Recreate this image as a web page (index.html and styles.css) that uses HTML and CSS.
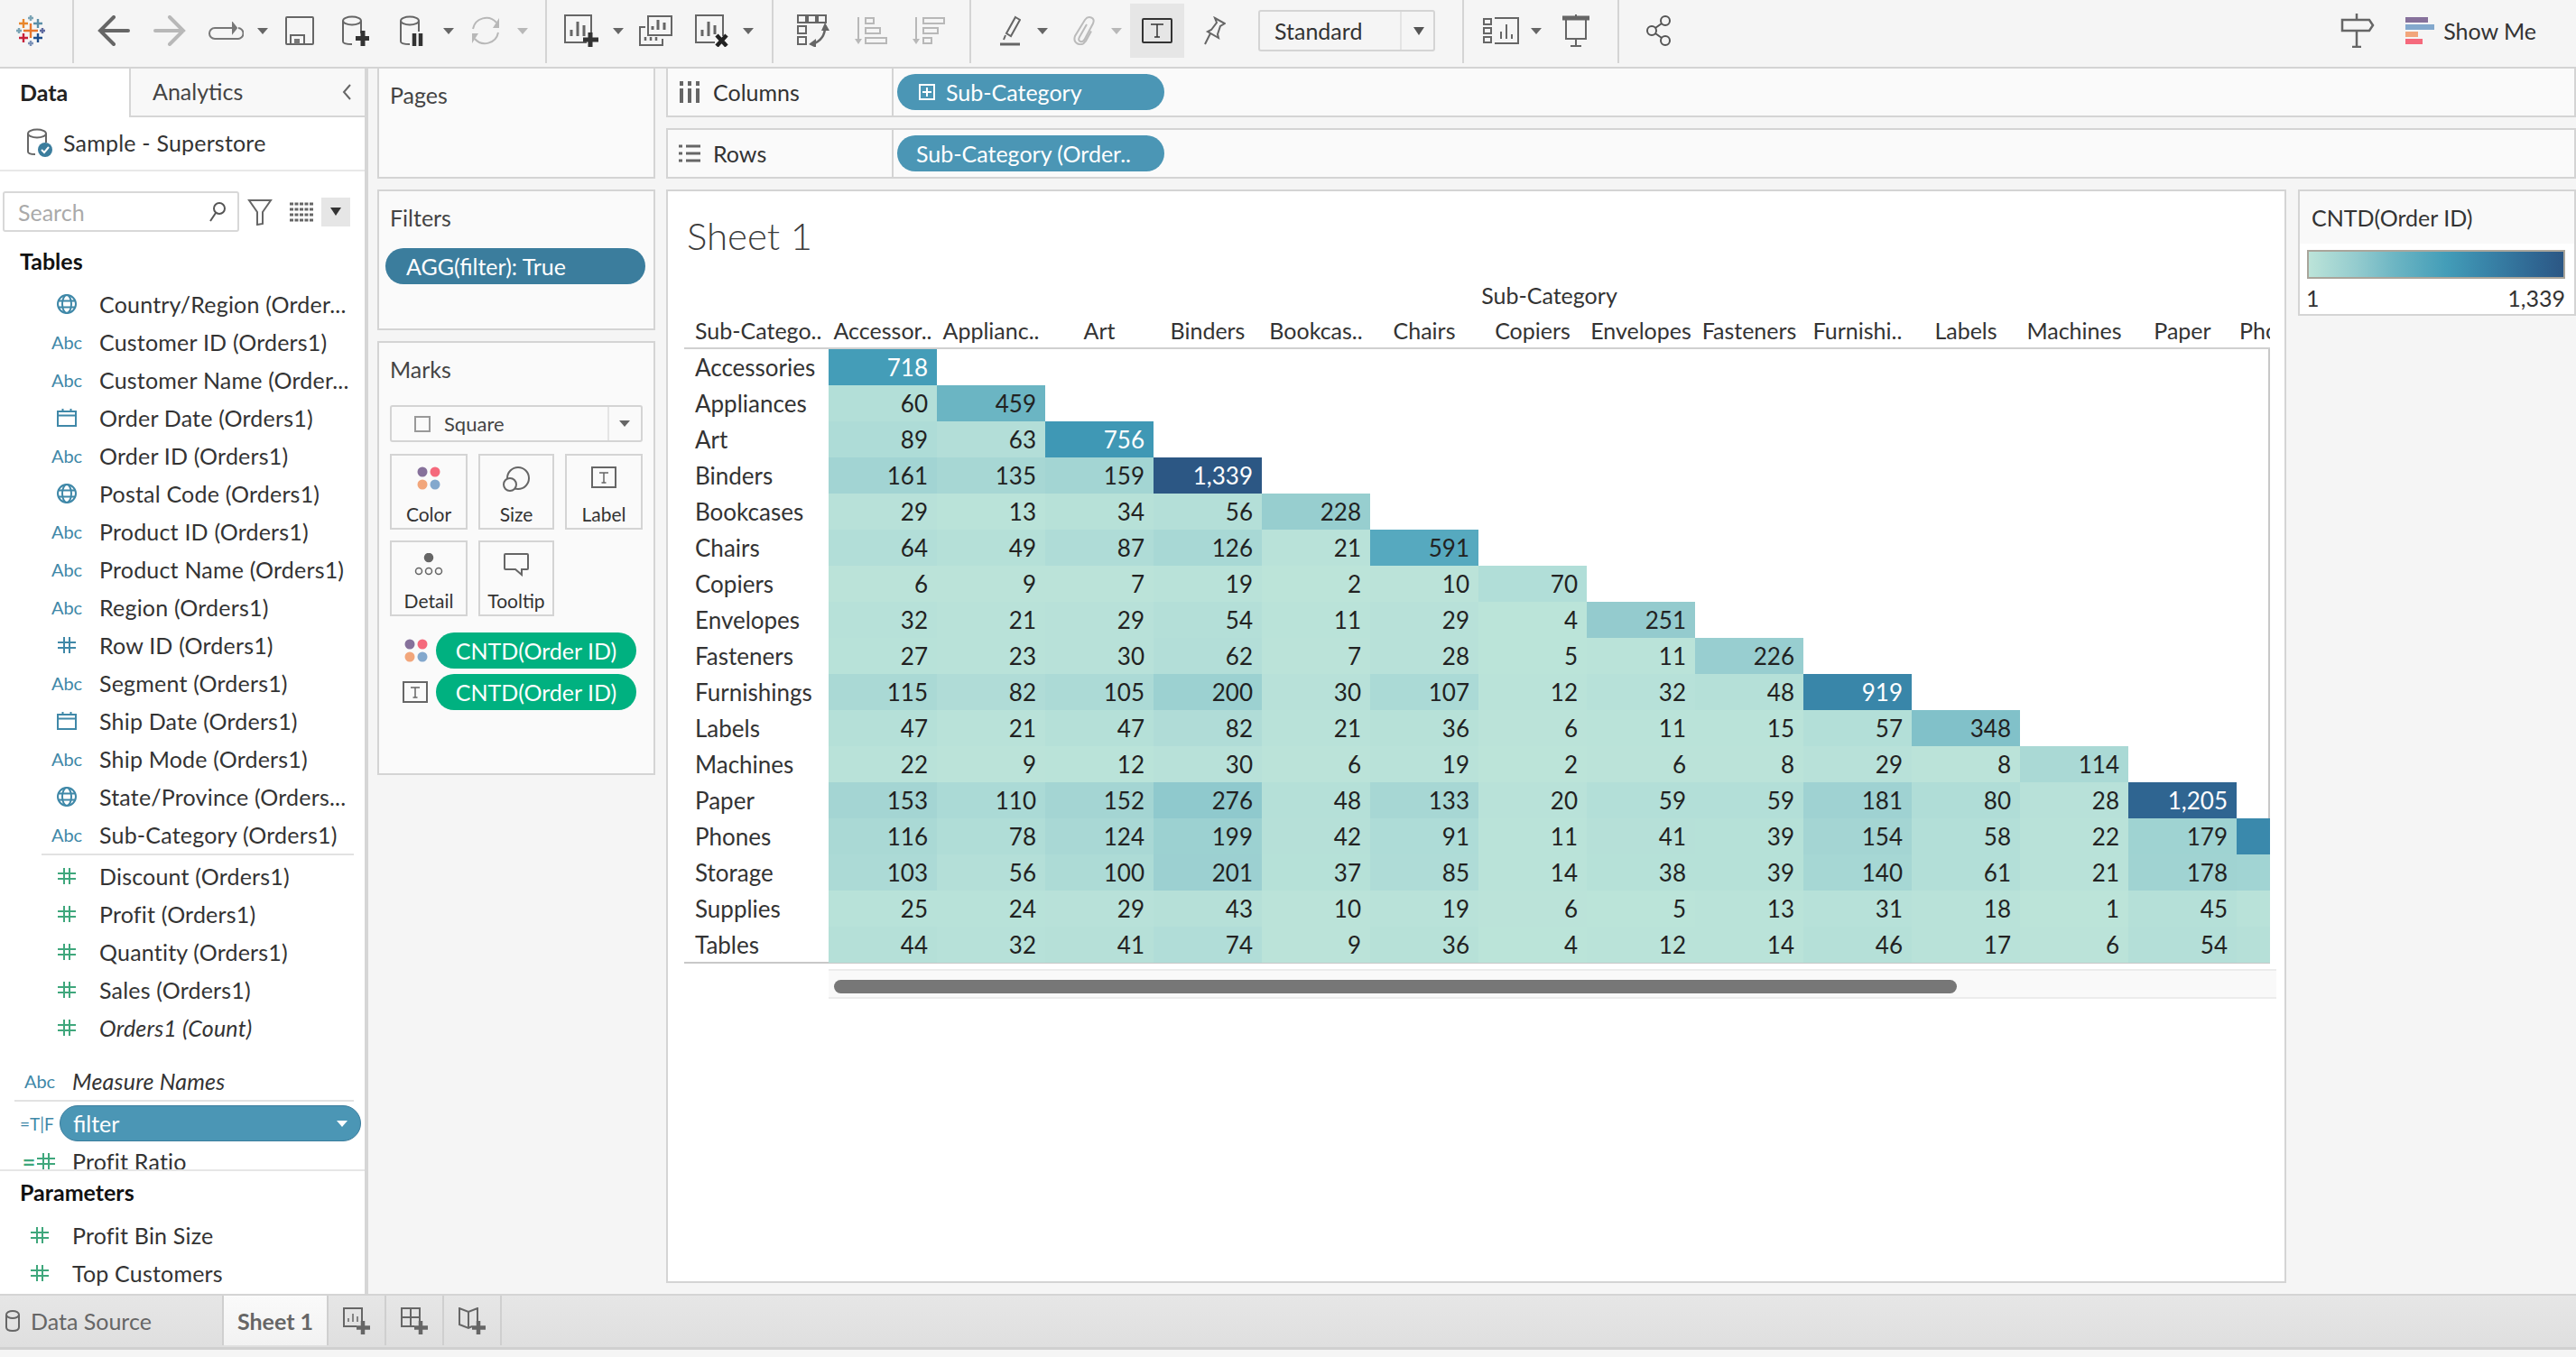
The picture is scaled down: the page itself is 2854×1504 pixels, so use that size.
FILE: index.html
```html
<!DOCTYPE html>
<html lang="en">

<head>
    <meta charset="UTF-8">
    <title>Sheet 1</title>
    <link rel="stylesheet" href="styles.css">
</head>

<body>
    <!-- shared icons -->
    <svg class="defs" width="0" height="0">
        <symbol id="i-globe" viewBox="0 0 22 22"><g fill="none" stroke="currentColor" stroke-width="2"><circle cx="11" cy="11" r="10"/><ellipse cx="11" cy="11" rx="5" ry="10"/><path d="M1.5 7.5h19M1.5 14.5h19"/></g></symbol>
        <symbol id="i-date" viewBox="0 0 22 22"><g fill="none" stroke="currentColor" stroke-width="2"><rect x="1" y="4" width="20" height="16"/><path d="M1 8.5h20M6.5 1v4M15.5 1v4"/></g></symbol>
        <symbol id="i-hash" viewBox="0 0 22 22"><g fill="none" stroke="currentColor" stroke-width="2"><path d="M8 2v18M14 2v18M1 8h20M1 14h20"/></g></symbol>
        <symbol id="i-dots" viewBox="0 0 26 26"><circle cx="6" cy="6" r="5.5" fill="#86719b"/><circle cx="20" cy="6" r="5.5" fill="#f5697c"/><circle cx="6" cy="20" r="5.5" fill="#f2a67b"/><circle cx="20" cy="20" r="5.5" fill="#83a8cd"/></symbol>
        <symbol id="i-t" viewBox="0 0 28 24"><rect x="1" y="1" width="26" height="22" fill="none" stroke="#666" stroke-width="2"/><path d="M9 7h10M14 7v11M11.500 18h5" fill="none" stroke="#666" stroke-width="1.500"/></symbol>
    </svg>

    <div class="toolbar">
        <div class="tb-group tb-logo">
            <svg width="34" height="34" viewBox="0 0 34 34" fill="none" stroke-width="2.400">
                <path d="M17 9v16M9 17h16" stroke="#e8762c"/>
                <path d="M9 4v10M4 9h10" stroke="#e8862c"/>
                <path d="M25 4v10M20 9h10" stroke="#5a8fa8"/>
                <path d="M9 20v10M4 25h10" stroke="#c8203a"/>
                <path d="M25 20v10M20 25h10" stroke="#1f4e8c"/>
                <path d="M17 0v6M14 3h6" stroke="#7ba4b5"/>
                <path d="M4 14v6M1 17h6" stroke="#7ba4b5"/>
                <path d="M30 14v6M27 17h6" stroke="#5f6ba0"/>
                <path d="M17 28v6M14 31h6" stroke="#7b92b8"/>
            </svg>
        </div>

        <div class="tb-group tb-undo">
            <span class="tool"><svg width="36" height="34" viewBox="0 0 36 34" fill="none" stroke="#666" stroke-width="4" stroke-linecap="round"><path d="M18 2L3 17l15 15M3 17h31"/></svg></span>
            <span class="tool"><svg width="36" height="34" viewBox="0 0 36 34" fill="none" stroke="#b8b8b8" stroke-width="4" stroke-linecap="round"><path d="M18 2l15 15-15 15M33 17H2"/></svg></span>
            <span class="tool"><svg width="40" height="20" viewBox="0 0 40 20" fill="none" stroke="#777" stroke-width="2"><path d="M28 7H8a6 6 0 0 0 0 12h25a6 6 0 0 0 1-12"/><path d="M28 2v10l4-5z" fill="#777"/></svg></span>
            <span class="caret"></span>
            <span class="tool"><svg width="32" height="32" viewBox="0 0 32 32" fill="none" stroke="#666" stroke-width="2"><rect x="1" y="1" width="30" height="30" rx="1"/><path d="M6 31V21h15v10"/><rect x="10" y="25" width="6" height="6" fill="#777" stroke="none"/></svg></span>
            <span class="tool"><svg width="30" height="34" viewBox="0 0 30 34" fill="none" stroke="#666" stroke-width="2"><ellipse cx="11" cy="6" rx="10" ry="4.500"/><path d="M1 6v23q0 3 10 3M21 6v14"/><path d="M23 17v17M15 25.500h15" stroke="#333" stroke-width="5"/></svg></span>
            <span class="tool"><svg width="26" height="34" viewBox="0 0 26 34" fill="none" stroke="#666" stroke-width="2"><ellipse cx="11" cy="6" rx="10" ry="4.500"/><path d="M1 6v23q0 3 10 3M21 6v12"/><path d="M16 20v14M23 20v14" stroke="#333" stroke-width="4.500"/></svg></span>
            <span class="caret"></span>
            <span class="tool"><svg width="36" height="34" viewBox="0 0 36 34" fill="none" stroke="#b8b8b8" stroke-width="2"><path d="M4 15a15 15 0 0 1 26-7M32 19a15 15 0 0 1-26 7"/><path d="M33 3v11H26zM3 31V20h7z" fill="#b8b8b8" stroke="none"/></svg></span>
            <span class="caret off"></span>
        </div>

        <div class="tb-group tb-sheet">
            <span class="tool"><svg width="38" height="36" viewBox="0 0 38 36" fill="none" stroke="#666" stroke-width="2"><path d="M30 27V1H1v30h24"/><path d="M8 24v-7M15 24V8M22 24V12" stroke-width="3"/><path d="M29 20v16M21 28h17" stroke="#333" stroke-width="5"/></svg></span>
            <span class="caret"></span>
            <span class="tool"><svg width="37" height="34" viewBox="0 0 37 34" fill="none" stroke="#666" stroke-width="2"><rect x="10" y="1" width="26" height="21"/><path d="M15 16v-4M21 16V5M28 16V8" stroke-width="3"/><path d="M7 13H1v20h25v-7"/><path d="M7 28v-4M13 28v-4M19 28v-4" stroke-width="2.500"/></svg></span>
            <span class="tool"><svg width="37" height="36" viewBox="0 0 37 36" fill="none" stroke="#666" stroke-width="2"><path d="M31 24V1H1v30h21"/><path d="M8 24v-7M15 24V8M22 22V12" stroke-width="3"/><path d="M24 23l11 12M35 23L24 35" stroke="#222" stroke-width="4.500"/></svg></span>
            <span class="caret"></span>
        </div>

        <div class="tb-group tb-sort">
            <span class="tool"><svg width="36" height="36" viewBox="0 0 36 36" fill="none" stroke="#666" stroke-width="2"><path d="M1 1h9v8H1zM12 1h9v8h-9zM23 1h9v8h-9zM1 13h9v8H1zM1 25h9v8H1z"/><path d="M31 14q0 14-14 19" stroke-width="2.500"/><path d="M31 9l5 9h-9zM13 33l8-6v10z" fill="#666" stroke="none"/></svg></span>
            <span class="tool"><svg width="36" height="30" viewBox="0 0 36 30" fill="none" stroke="#b8b8b8" stroke-width="2"><path d="M4 0v26"/><path d="M0 24h8l-4 6z" fill="#b8b8b8" stroke="none"/><rect x="12" y="1" width="9" height="6"/><rect x="12" y="12" width="16" height="6"/><rect x="12" y="23" width="23" height="6"/></svg></span>
            <span class="tool"><svg width="36" height="30" viewBox="0 0 36 30" fill="none" stroke="#b8b8b8" stroke-width="2"><path d="M4 0v26"/><path d="M0 24h8l-4 6z" fill="#b8b8b8" stroke="none"/><rect x="12" y="1" width="23" height="6"/><rect x="12" y="12" width="16" height="6"/><rect x="12" y="23" width="9" height="6"/></svg></span>
        </div>

        <div class="tb-group tb-format">
            <span class="tool tool-narrow"><svg width="24" height="34" viewBox="0 0 24 34" fill="none" stroke="#666" stroke-width="2"><path d="M18 2l5 3-10 18-5-3zM7 22l-2 5"/><path d="M1 32h22" stroke-width="3"/></svg></span>
            <span class="caret"></span>
            <span class="tool tool-narrow tool-clip"><svg width="26" height="32" viewBox="0 0 26 32" fill="none" stroke="#bbb" stroke-width="2"><path d="M16 9L8 23q-2 4 1 5t5-3l9-17q2-5-2-6.500T14 4L3 22q-2 6 3 8.500t9-3l6-11"/></svg></span>
            <span class="caret off"></span>
            <span class="tool tool-on"><svg width="34" height="28" viewBox="0 0 34 28" fill="none" stroke="#333" stroke-width="2"><rect x="1" y="1" width="32" height="26" rx="1"/><path d="M10 7h14M17 7v14M14 21h6" stroke-width="1.500"/></svg></span>
            <span class="tool tool-pin"><svg width="26" height="32" viewBox="0 0 26 32" fill="none" stroke="#666" stroke-width="2"><path d="M14 2l11 6-5 3-3 9 1 4-12-7 4-2 6-8zM9 19L3 31"/></svg></span>
            <div class="fit-select"><span>Standard</span><i class="caret"></i></div>
        </div>

        <div class="tb-group tb-present">
            <span class="tool tool-fit"><svg width="42" height="30" viewBox="0 0 42 30" fill="none" stroke="#666" stroke-width="2"><path d="M1 2h8v6H1zM1 12h8v6H1zM1 22h8v6H1z"/><path d="M13 1h26v28H13"/><path d="M20 24v-8M26 24V8M32 24v-5"/></svg></span>
            <span class="caret"></span>
            <span class="tool"><svg width="32" height="36" viewBox="0 0 32 36" fill="none" stroke="#666" stroke-width="2"><path d="M16 0v3M16 27v8M10 35h12"/><path d="M1 4h30" stroke-width="5"/><path d="M5 5v22h22V5"/></svg></span>
        </div>

        <div class="tb-group tb-share">
            <span class="tool"><svg width="30" height="34" viewBox="0 0 30 34" fill="none" stroke="#555" stroke-width="2"><circle cx="21" cy="6" r="5"/><circle cx="6" cy="17" r="5"/><circle cx="21" cy="28" r="5"/><path d="M17 9l-7 5M10 20l7 5"/></svg></span>
        </div>

        <div class="tb-right">
            <svg width="38" height="38" viewBox="0 0 38 38" fill="none" stroke="#666" stroke-width="2.500"><path d="M18 0v6M18 20v16M13 37h10" /><path d="M2 7h30l4 6-4 6H2z" stroke-width="2.500"/></svg>
            <div class="showme">
                <div class="showme-bars"><i class="bar-a"></i><i class="bar-b"></i><i class="bar-c"></i><i class="bar-d"></i></div>
                <span>Show Me</span>
            </div>
        </div>
    </div>

    <div class="main">
        <aside class="side">
            <div class="side-tabs">
                <div class="side-tab active">Data</div>
                <div class="side-tab">Analytics
                    <svg class="collapse" width="12" height="20" viewBox="0 0 12 20" fill="none" stroke="#666" stroke-width="2"><path d="M10 2l-7 8 7 8"/></svg>
                </div>
            </div>
            <div class="source">
                <svg width="28" height="32" viewBox="0 0 28 32" fill="none" stroke="#666" stroke-width="2"><ellipse cx="11" cy="6" rx="10" ry="4.500"/><path d="M1 6v20q0 3 8 3M21 6v10"/><circle cx="20" cy="24" r="8" fill="#3b7d9d" stroke="none"/><path d="M16 24l3 3 5-6" stroke="#fff"/></svg>
                <span>Sample - Superstore</span>
            </div>
            <div class="search-row">
                <div class="search">
                    <span>Search</span>
                    <svg width="20" height="24" viewBox="0 0 20 24" fill="none" stroke="#555" stroke-width="2"><circle cx="12" cy="8" r="6"/><path d="M8 13l-6 9"/></svg>
                </div>
                <svg class="search-funnel" width="28" height="30" viewBox="0 0 28 30" fill="none" stroke="#666" stroke-width="2"><path d="M2 2h24L17 15v13l-6 1V15z"/></svg>
                <svg class="search-list" width="26" height="24" viewBox="0 0 26 24" fill="none" stroke="#666" stroke-width="3" stroke-dasharray="4 1.500"><path d="M0 3h26M0 9h26M0 15h26M0 21h26"/></svg>
                <div class="search-menu"><i class="caret"></i></div>
            </div>

            <h4 class="side-head">Tables</h4>
            <div class="fields">
                <div class="field"><svg class="ficon blue"><use href="#i-globe"/></svg><span>Country/Region (Order...</span></div>
                <div class="field"><b class="abc">Abc</b><span>Customer ID (Orders1)</span></div>
                <div class="field"><b class="abc">Abc</b><span>Customer Name (Order...</span></div>
                <div class="field"><svg class="ficon blue"><use href="#i-date"/></svg><span>Order Date (Orders1)</span></div>
                <div class="field"><b class="abc">Abc</b><span>Order ID (Orders1)</span></div>
                <div class="field"><svg class="ficon blue"><use href="#i-globe"/></svg><span>Postal Code (Orders1)</span></div>
                <div class="field"><b class="abc">Abc</b><span>Product ID (Orders1)</span></div>
                <div class="field"><b class="abc">Abc</b><span>Product Name (Orders1)</span></div>
                <div class="field"><b class="abc">Abc</b><span>Region (Orders1)</span></div>
                <div class="field"><svg class="ficon blue"><use href="#i-hash"/></svg><span>Row ID (Orders1)</span></div>
                <div class="field"><b class="abc">Abc</b><span>Segment (Orders1)</span></div>
                <div class="field"><svg class="ficon blue"><use href="#i-date"/></svg><span>Ship Date (Orders1)</span></div>
                <div class="field"><b class="abc">Abc</b><span>Ship Mode (Orders1)</span></div>
                <div class="field"><svg class="ficon blue"><use href="#i-globe"/></svg><span>State/Province (Orders...</span></div>
                <div class="field"><b class="abc">Abc</b><span>Sub-Category (Orders1)</span></div>
                <div class="divider"></div>
                <div class="field"><svg class="ficon green"><use href="#i-hash"/></svg><span>Discount (Orders1)</span></div>
                <div class="field"><svg class="ficon green"><use href="#i-hash"/></svg><span>Profit (Orders1)</span></div>
                <div class="field"><svg class="ficon green"><use href="#i-hash"/></svg><span>Quantity (Orders1)</span></div>
                <div class="field"><svg class="ficon green"><use href="#i-hash"/></svg><span>Sales (Orders1)</span></div>
                <div class="field"><svg class="ficon green"><use href="#i-hash"/></svg><em>Orders1 (Count)</em></div>
                <div class="field outer names"><b class="abc">Abc</b><em>Measure Names</em></div>
                <div class="divider wide"></div>
                <div class="calc-row"><b class="tf">=T|F</b><div class="filter-pill">filter<i class="caret"></i></div></div>
                <div class="field outer"><b class="calc green">=<svg class="ficon green"><use href="#i-hash"/></svg></b><span>Profit Ratio</span></div>
            </div>
            <h4 class="side-head params">Parameters</h4>
            <div class="field outer"><svg class="ficon green"><use href="#i-hash"/></svg><span>Profit Bin Size</span></div>
            <div class="field outer"><svg class="ficon green"><use href="#i-hash"/></svg><span>Top Customers</span></div>
        </aside>

        <div class="cards">
            <div class="card-col">
                <div class="panel pages">Pages</div>
                <div class="panel filters">Filters
                    <div class="pill-filter">AGG(filter): True</div>
                </div>
                <div class="panel marks">Marks
                    <div class="mark-type">
                        <i class="mark-square"></i><span>Square</span><i class="caret"></i>
                    </div>
                    <div class="mark-grid">
                        <div class="mark-btn"><svg width="26" height="26"><use href="#i-dots"/></svg>Color</div>
                        <div class="mark-btn"><svg width="30" height="28" viewBox="0 0 30 28" fill="none" stroke="#666" stroke-width="2"><circle cx="17" cy="13" r="12"/><circle cx="8" cy="20" r="7" fill="#fafafa"/></svg>Size</div>
                        <div class="mark-btn"><svg width="28" height="24"><use href="#i-t"/></svg>Label</div>
                        <div class="mark-btn"><svg width="32" height="26" viewBox="0 0 32 26" fill="none" stroke="#666" stroke-width="1.500"><circle cx="16" cy="5" r="4.500" fill="#666"/><circle cx="5" cy="20" r="3.500"/><circle cx="16" cy="20" r="3.500"/><circle cx="27" cy="20" r="3.500"/></svg>Detail</div>
                        <div class="mark-btn"><svg width="28" height="26" viewBox="0 0 28 26" fill="none" stroke="#666" stroke-width="2"><path d="M2 1h24a1 1 0 0 1 1 1v15a1 1 0 0 1-1 1h-6v6l-7-6H2a1 1 0 0 1-1-1V2a1 1 0 0 1 1-1z"/></svg>Tooltip</div>
                    </div>
                    <div class="mark-field"><svg width="26" height="26"><use href="#i-dots"/></svg><div class="pill-measure">CNTD(Order ID)</div></div>
                    <div class="mark-field"><svg width="28" height="24"><use href="#i-t"/></svg><div class="pill-measure">CNTD(Order ID)</div></div>
                </div>
            </div>

            <div class="view-col">
                <div class="shelf shelf-cols">
                    <div class="shelf-label">
                        <svg width="24" height="24" viewBox="0 0 24 24" fill="none" stroke="#666" stroke-width="4"><path d="M3 8v16M12 8v16M21 8v16M3 0v5M12 0v5M21 0v5"/></svg>Columns
                    </div>
                    <div class="pill-dim">
                        <svg width="18" height="18" viewBox="0 0 18 18" fill="none" stroke="#fff" stroke-width="2"><rect x="1" y="1" width="16" height="16"/><path d="M9 4v10M4 9h10"/></svg>Sub-Category
                    </div>
                </div>
                <div class="shelf shelf-rows">
                    <div class="shelf-label">
                        <svg width="24" height="22" viewBox="0 0 24 22" fill="none" stroke="#666" stroke-width="3"><path d="M0 3h4M8 3h16M0 11h4M8 11h16M0 19h4M8 19h16"/></svg>Rows
                    </div>
                    <div class="pill-dim pill-rows">Sub-Category (Order..</div>
                </div>
                <div class="view-row">
                    <div class="sheet">
                        <div class="sheet-title">Sheet 1</div>
                        <div class="xtab-top">Sub-Category</div>
                        <div class="xtab-head" id="xtabHead"></div>
                        <div class="xtab-body" id="xtabBody"></div>
                        <div class="hscroll"><div class="hscroll-thumb"></div></div>
                    </div>
                    <div class="legend">
                        <div class="legend-title">CNTD(Order ID)</div>
                        <div class="legend-ramp"></div>
                        <div class="legend-range"><span>1</span><span>1,339</span></div>
                    </div>
                </div>
            </div>
        </div>
    </div>

    <div class="tabs">
        <div class="tab tab-source">
            <svg width="16" height="24" viewBox="0 0 16 24" fill="none" stroke="#666" stroke-width="2"><ellipse cx="8" cy="5" rx="7" ry="4"/><path d="M1 5v14q0 4 7 4t7-4V5"/></svg>
            Data Source
        </div>
        <div class="tab tab-sheet">Sheet 1</div>
        <div class="tab tab-new"><svg width="30" height="30" viewBox="0 0 30 30" fill="none" stroke="#666" stroke-width="2"><path d="M21 18V1H1v20h14"/><path d="M6 16v-4M11 16V7M16 16v-6" stroke-width="1.500"/><path d="M22 15v15M15 22.500h15" stroke-width="4.500"/></svg></div>
        <div class="tab tab-new"><svg width="30" height="30" viewBox="0 0 30 30" fill="none" stroke="#666" stroke-width="2"><path d="M21 17V1H1v20h14M11 1v20M1 11h20"/><path d="M22 15v15M15 22.500h15" stroke-width="4.500"/></svg></div>
        <div class="tab tab-new"><svg width="30" height="30" viewBox="0 0 30 30" fill="none" stroke="#666" stroke-width="2"><path d="M21 17V1L11 5 1 1v18l10 4 4-2M11 5v18"/><path d="M22 15v15M15 22.500h15" stroke-width="4.500"/></svg></div>
    </div>

    <script src="script.js"></script>
</body>

</html>
```

FILE: styles.css
```css
* {
    box-sizing: border-box;
}
body {
    margin: 0;
    width: 2854px;
    height: 1504px;
    overflow: hidden;
    background: #f5f5f5;
    color: #333;
    font-family: "Lato", "Noto Sans", sans-serif;
    font-size: 25px;
}
.defs {
    position: absolute;
}
.caret {
    display: block;
    width: 0;
    height: 0;
    border-left: 6px solid transparent;
    border-right: 6px solid transparent;
    border-top: 7px solid #666;
}

/* toolbar */
.toolbar {
    display: flex;
    height: 76px;
    border-bottom: 2px solid #d4d4d4;
}
.tb-group {
    display: flex;
    align-items: center;
    height: 70px;
    padding-bottom: 2px;
    border-right: 2px solid #d4d4d4;
}
.tb-logo {
    width: 82px;
    padding-left: 17px;
}
.tb-undo {
    padding: 0 15px 2px 13px;
}
.tb-sheet {
    padding: 0 16px 2px 7px;
}
.tb-sort {
    padding: 0 13px 2px 12px;
}
.tb-sort .tool {
    width: 64px;
}
.tb-format {
    padding: 0 30px 2px 17px;
}
.tb-present {
    padding: 0 15px 2px 11px;
}
.tb-share {
    padding: 0 0 2px 14px;
    border-right: none;
}
.tool {
    display: flex;
    align-items: center;
    justify-content: center;
    width: 62px;
    height: 60px;
}
.tool-narrow {
    width: 52px;
}
.tool-clip {
    margin-left: 10px;
}
.tool-on {
    width: 60px;
    margin-left: 5px;
    background: #e6e6e6;
}
.tool-pin {
    width: 66px;
}
.tool-fit {
    margin-right: -3px;
}
.tb-present .tool:last-child {
    margin-left: 3px;
}
.tb-group > .caret {
    margin: 0 4px;
}
.tb-group > .caret.off {
    border-top-color: #b8b8b8;
}
.fit-select {
    position: relative;
    display: flex;
    align-items: center;
    justify-content: space-between;
    width: 196px;
    height: 46px;
    margin-left: 16px;
    padding: 0 10px 0 16px;
    border: 2px solid #d4d4d4;
    border-radius: 3px;
    font-size: 25px;
}
.fit-select::after {
    content: "";
    position: absolute;
    right: 35px;
    top: 0;
    bottom: 0;
    width: 2px;
    background: #e4e4e4;
}
.fit-select .caret {
    border-top: 9px solid #555;
}
.tb-right {
    display: flex;
    align-items: center;
    gap: 34px;
    height: 70px;
    margin-left: auto;
    padding: 0 44px 2px 0;
}
.showme {
    display: flex;
    align-items: center;
    gap: 10px;
}
.showme-bars {
    display: flex;
    flex-direction: column;
    gap: 2px;
    width: 32px;
}
.showme-bars i {
    display: block;
    height: 6px;
}
.bar-a { width: 25px; background: #86719b; }
.bar-b { width: 32px; background: #83a8cd; }
.bar-c { width: 14px; background: #f2a67b; }
.bar-d { width: 19px; background: #f5697c; }

/* left data pane */
.main {
    display: flex;
    height: 1360px;
    border-bottom: 2px solid #d4d4d4;
}
.side {
    flex: none;
    width: 408px;
    background: #fff;
    border-right: 4px solid #d6d6d6;
}
.side-tabs {
    display: flex;
    height: 54px;
}
.side-tab {
    position: relative;
    display: flex;
    align-items: center;
    padding: 0 0 3px 22px;
    color: #444;
}
.side-tab.active {
    width: 143px;
    font-weight: 700;
    color: #222;
}
.side-tab:not(.active) {
    flex: 1;
    padding-left: 24px;
    background: #f8f8f8;
    border-left: 2px solid #d6d6d6;
    border-bottom: 2px solid #d6d6d6;
}
.collapse {
    position: absolute;
    right: 14px;
    top: 16px;
}
.source {
    display: flex;
    align-items: center;
    gap: 12px;
    height: 60px;
    padding: 0 0 2px 30px;
    border-bottom: 2px solid #e8e8e8;
    letter-spacing: 0.2px;
}
.search-row {
    display: flex;
    align-items: center;
    padding: 22px 0 0 3px;
}
.search {
    display: flex;
    align-items: center;
    justify-content: space-between;
    width: 262px;
    height: 45px;
    padding: 0 12px 0 15px;
    border: 2px solid #d8d8d8;
    border-radius: 3px;
    color: #aaa;
}
.search-funnel {
    margin-left: 9px;
}
.search-list {
    margin-left: 19px;
}
.search-menu {
    display: flex;
    align-items: center;
    justify-content: center;
    width: 32px;
    height: 32px;
    margin-left: 9px;
    background: #e6e6e6;
}
.search-menu .caret {
    border-top-color: #333;
    border-top-width: 9px;
}
.side-head {
    margin: 0;
    padding: 17px 0 0 22px;
    height: 59px;
    font-size: 25px;
    font-weight: 700;
    color: #111;
}
.fields {
    height: 982px;
    overflow: hidden;
    border-bottom: 2px solid #e6e6e6;
}
.field {
    display: flex;
    align-items: center;
    height: 42px;
    padding-left: 50px;
    white-space: nowrap;
}
.field span, .field em {
    margin-left: 12px;
    color: #333;
    letter-spacing: 0.2px;
}
.field.outer {
    padding-left: 20px;
}
.names {
    margin-top: 17px;
}
.ficon, .abc, .calc {
    display: flex;
    align-items: center;
    justify-content: center;
    flex: none;
    width: 48px;
    height: 22px;
}
.blue, .abc {
    color: #3f88a8;
}
.green {
    color: #3fa77c;
}
.abc {
    font-size: 20px;
    font-weight: 400;
}
.calc .ficon {
    width: 24px;
    margin-left: 0;
}
.divider {
    height: 2px;
    margin: 0 12px 2px 46px;
    background: #e2e2e2;
}
.divider.wide {
    margin: 0 12px 3px 16px;
}
.calc-row {
    display: flex;
    align-items: center;
    height: 42px;
    padding-left: 22px;
}
.tf {
    width: 44px;
    color: #3f88a8;
    font-size: 19px;
    font-weight: 400;
}
.filter-pill {
    display: flex;
    align-items: center;
    justify-content: space-between;
    width: 334px;
    height: 40px;
    padding: 0 14px;
    background: #4b96b5;
    border: 1px solid #3b7d9d;
    border-radius: 20px;
    color: #fff;
}
.filter-pill .caret {
    border-top-color: #fff;
}
.side-head.params {
    height: 50px;
    padding-top: 8px;
}

/* pages, filters, marks */
.cards {
    flex: 1;
    display: flex;
    gap: 12px;
    padding-left: 10px;
}
.card-col {
    flex: none;
    width: 308px;
    display: flex;
    flex-direction: column;
    gap: 12px;
}
.panel {
    padding: 14px 12px;
    background: #fafafa;
    border: 2px solid #d4d4d4;
    color: #444;
}
.pages {
    height: 122px;
    border-top: none;
}
.filters {
    height: 156px;
}
.pill-filter {
    display: flex;
    align-items: center;
    height: 40px;
    margin: 19px 0 0 -5px;
    width: 288px;
    padding-left: 23px;
    background: #3b7d9d;
    border-radius: 20px;
    color: #fff;
}
.marks {
    height: 481px;
}
.mark-type {
    display: flex;
    align-items: center;
    width: 280px;
    height: 41px;
    margin: 25px 0 13px;
    padding-left: 25px;
    border: 2px solid #d4d4d4;
    border-radius: 3px;
    font-size: 22px;
    position: relative;
}
.mark-square {
    width: 18px;
    height: 18px;
    margin-right: 15px;
    border: 2px solid #999;
}
.mark-type .caret {
    margin-left: auto;
    margin-right: 12px;
}
.mark-type::after {
    content: "";
    position: absolute;
    right: 35px;
    top: 0;
    bottom: 0;
    width: 2px;
    background: #e4e4e4;
}
.mark-grid {
    display: grid;
    grid-template-columns: 86px 84px 86px;
    grid-auto-rows: 84px;
    gap: 12px;
    margin-bottom: 18px;
}
.mark-btn {
    display: flex;
    flex-direction: column;
    align-items: center;
    justify-content: space-between;
    padding: 12px 0 3px;
    border: 2px solid #d4d4d4;
    font-size: 21px;
    color: #333;
}
.mark-field {
    display: flex;
    align-items: center;
    justify-content: flex-end;
    gap: 9px;
    width: 273px;
    margin-bottom: 6px;
}
.pill-measure {
    display: flex;
    align-items: center;
    justify-content: center;
    width: 222px;
    height: 40px;
    background: #00b180;
    border-radius: 20px;
    color: #fff;
}

/* shelves */
.view-col {
    flex: 1;
    display: flex;
    flex-direction: column;
    gap: 12px;
    min-width: 0;
}
.shelf {
    display: flex;
    align-items: center;
    background: #fafafa;
    border: 2px solid #d4d4d4;
}
.shelf-cols {
    height: 54px;
    border-top: none;
}
.shelf-rows {
    height: 56px;
}
.shelf-label {
    display: flex;
    align-items: center;
    gap: 14px;
    align-self: stretch;
    width: 250px;
    padding: 0 0 1px 12px;
    border-right: 2px solid #d4d4d4;
}
.pill-dim {
    display: flex;
    align-items: center;
    gap: 12px;
    width: 296px;
    height: 40px;
    margin-left: 4px;
    padding-left: 24px;
    background: #4b96b5;
    border-radius: 20px;
    color: #fff;
}
.pill-rows {
    padding-left: 21px;
}

/* the view */
.view-row {
    flex: 1;
    display: flex;
    gap: 13px;
    align-items: flex-start;
}
.sheet {
    flex: none;
    width: 1795px;
    height: 1212px;
    padding: 23px 0 0 18px;
    background: #fff;
    border: 2px solid #d4d4d4;
}
.sheet-title {
    height: 52px;
    margin-left: 3px;
    font-size: 42px;
    font-weight: 300;
    line-height: 52px;
    color: #3c3c3c;
}
.xtab-top {
    width: 1597px;
    height: 40px;
    margin: 21px 0 0 160px;
    line-height: 38px;
    text-align: center;
    color: #333;
}
.xtab-head, .xtab-row {
    display: grid;
    grid-template-columns: 160px repeat(13, 120px) 37px;
    width: 1757px;
    height: 40px;
    white-space: nowrap;
}
.xtab-head {
    height: 37px;
    line-height: 37px;
    text-align: center;
    overflow: hidden;
}
.xtab-head .corner {
    padding-left: 12px;
    text-align: left;
}
.xtab-head .clip {
    padding-left: 3px;
    text-align: left;
    overflow: hidden;
}
.xtab-body {
    width: 1757px;
    height: 683px;
    border-top: 2px solid #d0d0d0;
    box-shadow: inset -2px -2px 0 #c8c8c8;
}
.xtab-row .row-name {
    padding-left: 12px;
    font-size: 26px;
    line-height: 40px;
}
.cell {
    padding-right: 10px;
    font-size: 26px;
    line-height: 40px;
    text-align: right;
    color: #222;
}
.cell.light {
    color: #fff;
}
.hscroll {
    width: 1604px;
    height: 33px;
    margin: 6px 0 0 160px;
    padding: 10px 0 0 6px;
    background: #f9f9f9;
    border-top: 2px solid #ececec;
    border-bottom: 2px solid #ececec;
}
.hscroll-thumb {
    width: 1244px;
    height: 15px;
    background: #777;
    border-radius: 8px;
}

/* legend */
.legend {
    flex: 1;
    height: 140px;
    background: #fff;
    border: 2px solid #d4d4d4;
}
.legend-title {
    height: 58px;
    padding: 14px 0 0 13px;
    background: #f9f9f9;
}
.legend-ramp {
    height: 32px;
    margin: 7px 10px 0 8px;
    background: linear-gradient(90deg, #bce4d9, #93cbce 19%, #6cb5c3 34%, #439db8 54%, #3985a9 69%, #2f6591 90%, #2c5784);
    border: 2px solid #a9a59b;
}
.legend-range {
    display: flex;
    justify-content: space-between;
    padding: 6px 10px 0 7px;
}

/* sheet tabs */
.tabs {
    display: flex;
    height: 60px;
    padding: 0 0 2px;
    background: linear-gradient(#e6e6e6, #dfdfdf);
    border-bottom: 3px solid #d0d0d0;
    color: #666;
}
.tab {
    display: flex;
    align-items: center;
    border-right: 2px solid #cfcfcf;
}
.tab-source {
    gap: 12px;
    width: 248px;
    padding-left: 6px;
}
.tab-sheet {
    justify-content: center;
    width: 116px;
    background: linear-gradient(#fafafa, #f2f2f2);
    font-weight: 700;
}
.tab-new {
    justify-content: center;
    width: 64px;
}
```

FILE: script.js
```js
// sub-category crosstab
const names = ['Accessories', 'Appliances', 'Art', 'Binders', 'Bookcases', 'Chairs', 'Copiers', 'Envelopes', 'Fasteners', 'Furnishings', 'Labels', 'Machines', 'Paper', 'Phones', 'Storage', 'Supplies', 'Tables'];
const heads = ['Accessor..', 'Applianc..', 'Art', 'Binders', 'Bookcas..', 'Chairs', 'Copiers', 'Envelopes', 'Fasteners', 'Furnishi..', 'Labels', 'Machines', 'Paper'];
const rows = [
    [718],
    [60, 459],
    [89, 63, 756],
    [161, 135, 159, 1339],
    [29, 13, 34, 56, 228],
    [64, 49, 87, 126, 21, 591],
    [6, 9, 7, 19, 2, 10, 70],
    [32, 21, 29, 54, 11, 29, 4, 251],
    [27, 23, 30, 62, 7, 28, 5, 11, 226],
    [115, 82, 105, 200, 30, 107, 12, 32, 48, 919],
    [47, 21, 47, 82, 21, 36, 6, 11, 15, 57, 348],
    [22, 9, 12, 30, 6, 19, 2, 6, 8, 29, 8, 114],
    [153, 110, 152, 276, 48, 133, 20, 59, 59, 181, 80, 28, 1205],
    [116, 78, 124, 199, 42, 91, 11, 41, 39, 154, 58, 22, 179, 889],
    [103, 56, 100, 201, 37, 85, 14, 38, 39, 140, 61, 21, 178, 170],
    [25, 24, 29, 43, 10, 19, 6, 5, 13, 31, 18, 1, 45, 20],
    [44, 32, 41, 74, 9, 36, 4, 12, 14, 46, 17, 6, 54, 40]
];

// colour ramp, value share -> rgb
const ramp = [
    [0, [188, 228, 217]],
    [0.05, [178, 222, 216]],
    [0.19, [147, 203, 206]],
    [0.34, [108, 181, 195]],
    [0.44, [86, 169, 191]],
    [0.54, [67, 157, 184]],
    [0.565, [63, 152, 181]],
    [0.69, [57, 133, 169]],
    [0.9, [47, 101, 145]],
    [1, [44, 87, 132]]
];

function colorFor(value) {
    const t = value / 1339;
    for (let i = 1; i < ramp.length; i++) {
        if (t <= ramp[i][0]) {
            const [t0, c0] = ramp[i - 1];
            const [t1, c1] = ramp[i];
            const k = (t - t0) / (t1 - t0);
            const mix = c0.map((c, j) => Math.round(c + (c1[j] - c) * k));
            return `rgb(${mix.join(',')})`;
        }
    }
    return 'rgb(44,87,132)';
}

function addCell(parent, text, className) {
    const el = document.createElement('div');
    el.textContent = text;
    if (className) el.className = className;
    parent.appendChild(el);
    return el;
}

const head = document.getElementById('xtabHead');
addCell(head, 'Sub-Catego..', 'corner');
heads.forEach(name => addCell(head, name));
addCell(head, 'Phones', 'clip');

const body = document.getElementById('xtabBody');
rows.forEach((values, r) => {
    const row = document.createElement('div');
    row.className = 'xtab-row';
    addCell(row, names[r], 'row-name');
    values.forEach((value, c) => {
        // the 14th column is cut off before its number starts
        const text = c < 13 ? value.toLocaleString('en-US') : '';
        const cell = addCell(row, text, value >= 700 ? 'cell light' : 'cell');
        cell.style.background = colorFor(value);
    });
    body.appendChild(row);
});
```
